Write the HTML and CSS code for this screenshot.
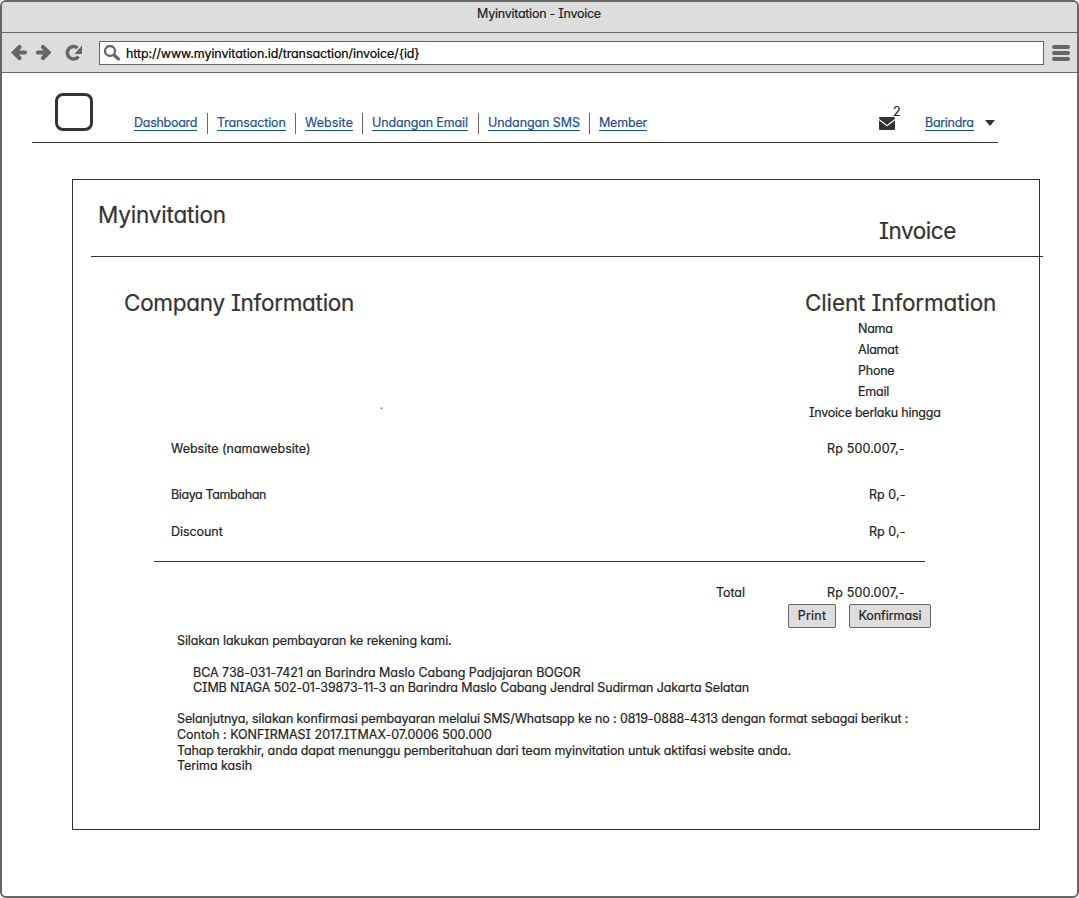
FILE: index.html
```html
<!DOCTYPE html>
<html lang="id">
<head>
<meta charset="utf-8">
<title>Myinvitation - Invoice</title>
<link rel="stylesheet" href="styles.css">
</head>
<body>
<div class="window">
  <div class="titlebar"><span class="window-title">Myinvitation - Invoice</span></div>
  <div class="toolbar">
    <svg class="nav-icons" width="86" height="24" viewBox="0 0 86 24" fill="none" stroke="#666">
      <path d="M13 11.500H23M17.500 6L12 11.500l5.500 5.500" stroke-width="4.200" stroke-linecap="round"/>
      <path d="M36 11.500H46M41 6l5.500 5.500L41 17" stroke-width="4.200" stroke-linecap="round"/>
      <path d="M75.500 7A6.200 6.200 0 1 0 76.500 15.500" stroke-width="3.500"/>
      <path d="M80 4.500v8.500h-7.500z" fill="#666" stroke="none"/>
    </svg>
    <div class="address">
      <svg width="18" height="18" viewBox="0 0 18 18" fill="none" stroke="#666"><circle cx="6" cy="6" r="5" stroke-width="2.300"/><path d="M10 10L14.500 14" stroke-width="3.200" stroke-linecap="round"/></svg>
      <span class="url">http://www.myinvitation.id/transaction/invoice/{id}</span>
    </div>
    <div class="burger"><i></i><i></i><i></i></div>
  </div>
  <header class="site-header">
    <div class="logo"></div>
    <nav class="menu">
      <a class="dashboard">Dashboard</a>
      <a class="transaction">Transaction</a>
      <a class="website">Website</a>
      <a class="email">Undangan Email</a>
      <a class="sms">Undangan SMS</a>
      <a class="member">Member</a>
    </nav>
    <div class="mail">
      <svg width="16" height="13" viewBox="0 0 16 13"><path d="M1 0h14q1 0 1 1v.8L8 8 0 1.800V1q0-1 1-1zM0 3.300L8 9.500l8-6.200V12q0 1-1 1H1q-1 0-1-1z" fill="#333"/></svg>
      <span class="count">2</span>
    </div>
    <a class="user">Barindra</a>
    <span class="caret"></span>
  </header>
  <main class="card">
    <div class="card-head">
      <h1 class="brand">Myinvitation</h1>
      <h1 class="doc-type">Invoice</h1>
    </div>
    <section class="parties">
      <div class="company"><h2>Company Information</h2><span class="dot">.</span></div>
      <div class="client">
        <h2>Client Information</h2>
        <ul class="fields"><li>Nama</li><li>Alamat</li><li>Phone</li><li>Email</li></ul>
        <p class="valid">Invoice berlaku hingga</p>
      </div>
    </section>
    <section class="items">
      <div class="item first"><span class="label-site">Website (namawebsite)</span><span class="price">Rp 500.007,-</span></div>
      <div class="item second"><span class="label-extra">Biaya Tambahan</span><span class="zero">Rp 0,-</span></div>
      <div class="item"><span class="label-disc">Discount</span><span class="zero">Rp 0,-</span></div>
    </section>
    <div class="total"><span class="label-total">Total</span><span class="price">Rp 500.007,-</span></div>
    <div class="actions"><button class="print">Print</button><button class="confirm">Konfirmasi</button></div>
    <section class="notes">
      <p class="n1">Silakan lakukan pembayaran ke rekening kami.</p>
      <p class="n2">BCA 738-031-7421 an Barindra Maslo Cabang Padjajaran BOGOR</p>
      <p class="n3">CIMB NIAGA 502-01-39873-11-3 an Barindra Maslo Cabang Jendral Sudirman Jakarta Selatan</p>
      <p class="n4">Selanjutnya, silakan konfirmasi pembayaran melalui SMS/Whatsapp ke no : 0819-0888-4313 dengan format sebagai berikut :</p>
      <p class="n5">Contoh : KONFIRMASI 2017.ITMAX-07.0006 500.000</p>
      <p class="n6">Tahap terakhir, anda dapat menunggu pemberitahuan dari team myinvitation untuk aktifasi website anda.</p>
      <p class="n7">Terima kasih</p>
    </section>
  </main>
</div>
</body>
</html>
```
FILE: styles.css
```css
* { box-sizing: border-box; margin: 0; padding: 0; }
body { background: #fff; }
.window {
  width: 1079px; height: 898px; border: 2px solid #666; border-radius: 6px; overflow: hidden;
  font: 400 12.5px/18px Inter, "Open Sans", sans-serif;
  font-feature-settings: "cv11", "cv08";
  -webkit-text-stroke: .2px;
  color: #222; white-space: nowrap;
}
h1, h2 { font-size: 22.5px; line-height: 28px; font-weight: 400; color: #333; }
.titlebar { height: 31px; padding-top: 3px; background: #ddd; border-bottom: 1px solid #666; text-align: center; }
.window-title { margin-right: 1px; letter-spacing: -.26px; }
.toolbar { display: flex; height: 40px; padding: 8px 7px 0 0; background: #ddd; border-bottom: 1px solid #666; }
.nav-icons { width: 86px; margin-right: 11px; }
.address { display: flex; width: 945px; height: 24px; padding: 3px 0 0 4px; background: #fff; border: 1px solid #666; }
.url { margin-left: 4px; color: #000; letter-spacing: -.1px; }
.burger { display: grid; gap: 2px; width: 18px; margin: 4px 0 0 8px; align-content: start; }
.burger i { height: 4px; border-radius: 2px; background: #666; }

.site-header { display: flex; width: 966px; height: 70px; margin-left: 30px; border-bottom: 1px solid #333; }
.logo { width: 38px; height: 38px; margin: 20px 0 0 23px; border: 3px solid #333; border-radius: 8px; }
.menu { display: flex; width: 735px; margin: 40px 0 0 41px; height: 21px; }
.menu a { position: relative; height: 17px; margin-top: 1px; }
a { color: #1c4f8f; border-bottom: 1px solid #0f5296; }
.menu a + a::before { content: ""; position: absolute; left: -10px; top: -1px; height: 21px; border-left: 1px solid #666; }
.menu .dashboard { width: 63px; letter-spacing: -.27px; }
.menu .transaction { width: 69px; margin-left: 20px; letter-spacing: -.15px; }
.menu .website { width: 48px; margin-left: 19px; letter-spacing: .07px; }
.menu .email { width: 96px; margin-left: 19px; letter-spacing: -.14px; }
.menu .sms { width: 92px; margin-left: 20px; letter-spacing: -.09px; }
.menu .member { width: 48px; margin-left: 19px; letter-spacing: -.17px; }
.mail { display: flex; width: 46px; margin: 30px 0 0 10px; }
.mail svg { margin-top: 14px; }
.count { margin-left: -2px; }
.user { width: 49px; height: 17px; margin-top: 41px; letter-spacing: -.3px; }
.menu, .mail, .user, .caret, .logo { flex: none; }
.caret { margin: 47px 0 0 11px; width: 10px; height: 6px; background: #333; clip-path: polygon(0 0, 100% 0, 50% 100%); }

.card { width: 968px; height: 651px; margin: 36px 0 0 70px; border: 1px solid #333; }
.card-head { display: flex; width: 952px; height: 77px; margin-left: 18px; border-bottom: 1px solid #333; }
.brand { width: 781px; margin: 21px 0 0 7px; flex: none; letter-spacing: -.18px; }
.doc-type { margin-top: 37px; letter-spacing: -.44px; }
.parties { display: flex; height: 151px; margin: 32px 0 0 51px; }
.company { width: 681px; letter-spacing: -.28px; }
.client h2 { letter-spacing: -.14px; }
.dot { display: block; margin: 82px 0 0 256px; font-size: 10px; line-height: 12px; }
.fields { list-style: none; margin: 3px 0 0 53px; letter-spacing: -.24px; }
.fields li { height: 21px; }
.valid { margin-left: 4px; letter-spacing: -.25px; }
.items { height: 122px; width: 771px; margin-left: 81px; border-bottom: 1px solid #333; }
.item { display: flex; justify-content: space-between; width: 735px; margin-left: 17px; height: 37px; }
.first { height: 46px; }
.label-site { letter-spacing: 0; }
.label-extra { letter-spacing: -.38px; }
.label-disc { letter-spacing: -.05px; }
.price { width: 79px; letter-spacing: .15px; }
.zero { width: 37px; letter-spacing: .05px; }
.total { display: flex; margin: 22px 0 0 643px; height: 20px; }
.label-total { width: 111px; letter-spacing: -.07px; }
.actions { display: flex; gap: 13px; margin-left: 715px; }
button { height: 24px; font: inherit; font-feature-settings: inherit; color: #222; background: #ddd; border: 1px solid #666; border-radius: 2px; padding: 0 0 2px; }
.print { width: 48px; letter-spacing: .2px; }
.confirm { width: 82px; letter-spacing: -.05px; }
.actions button { padding: 0; }
.notes { margin: 4px 0 0 104px; }
.notes p { height: 16px; }
.notes .n1 { height: 32px; letter-spacing: -.11px; }
.notes .n2 { height: 15px; margin-left: 16px; letter-spacing: -.035px; }
.notes .n3 { height: 31px; margin-left: 16px; letter-spacing: -.115px; }
.notes .n4 { letter-spacing: -.12px; }
.notes .n5 { letter-spacing: -.04px; }
.notes .n6 { height: 15px; letter-spacing: -.13px; }
.notes .n7 { letter-spacing: -.06px; }
```
